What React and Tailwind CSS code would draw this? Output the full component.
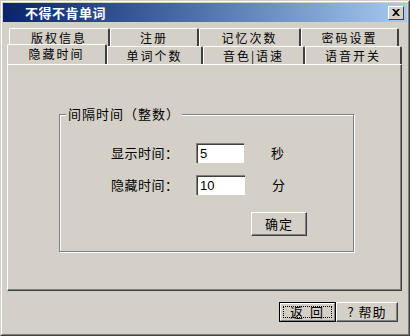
import React from "react";

const font = { fontFamily: '"Noto Sans CJK SC", "Noto Sans", sans-serif' };

function Tab({ w, label, selected }) {
  return (
    <div
      className={
        "flex items-center justify-center border-l border-t border-r-2 border-l-white border-t-white border-r-[#404040] rounded-t-[2px] text-[12px] leading-[12px] tracking-[2px] text-black bg-[#d4d0c8] " +
        (selected ? "h-[20px] -mt-[2px] relative z-10 pb-[1px]" : "h-[18px]")
      }
      style={{ width: w }}
    >
      {label}
    </div>
  );
}

export default function App() {
  return (
    <div
      className="w-[410px] h-[336px] bg-[#d4d0c8] border-t border-l border-t-[#d4d0c8] border-l-[#d4d0c8] border-r border-b border-r-[#404040] border-b-[#404040] overflow-hidden"
      style={font}
    >
      <div className="h-full border-t border-l border-t-white border-l-white border-r border-b border-r-[#808080] border-b-[#808080] p-[1px] flex flex-col">
        {/* title bar */}
        <div className="h-[19px] flex items-center justify-between pl-[22px] pr-[3px] bg-gradient-to-r from-[#0a246a] to-[#a6caf0]">
          <span className="text-white font-bold text-[13px] tracking-[0.5px] leading-none">不得不肯单词</span>
          <div className="w-[16px] h-[14px] bg-[#d4d0c8] border-t border-l border-t-white border-l-white border-r border-b border-r-[#404040] border-b-[#404040] flex items-center justify-center">
            <svg width="8" height="7" viewBox="0 0 8 7">
              <path d="M0 0L2 0L4 2L6 0L8 0L5 3.5L8 7L6 7L4 5L2 7L0 7L3 3.5Z" fill="#000" />
            </svg>
          </div>
        </div>

        {/* tabs */}
        <div className="flex flex-col pt-[5px] pl-[4px]">
          <div className="flex pl-[2px] pt-[1px]">
            <Tab w={101} label="版权信息" />
            <Tab w={89} label="注册" />
            <Tab w={102} label="记忆次数" />
            <Tab w={98} label="密码设置" />
          </div>
          <div className="flex">
            <Tab w={100} label="隐藏时间" selected />
            <Tab w={96} label="单词个数" />
            <Tab w={102} label="音色|语速" />
            <Tab w={97} label="语音开关" />
          </div>
        </div>

        {/* panel */}
        <div className="ml-[4px] w-[395px] h-[227px] border-l border-t border-l-white border-t-white border-r border-b border-r-[#404040] border-b-[#404040]">
          <div className="w-full h-full border-r border-b border-r-[#808080] border-b-[#808080] pt-[49px] pl-[51px]">
            {/* group box */}
            <div className="relative w-[295px] h-[138px] border border-[#808080] shadow-[inset_1px_1px_0_#ffffff,1px_1px_0_#ffffff]">
              <div className="absolute -top-[9px] left-[6px] px-[2px] bg-[#d4d0c8] text-[13px] tracking-[1px] leading-[16px] text-black">
                间隔时间（整数）
              </div>
              <div className="flex flex-col pt-[28px] pl-[51px] text-[13px] text-black">
                <div className="flex items-center h-[20px]">
                  <span className="w-[85px] tracking-[0.5px]">显示时间：</span>
                  <div className="w-[48px] h-[20px] bg-white border-t border-l border-t-[#808080] border-l-[#808080] shadow-[inset_1px_1px_0_#404040] flex items-center pl-[3px] text-[13px]" style={{ fontFamily: '"Liberation Sans", sans-serif' }}>
                    5
                  </div>
                  <span className="ml-[27px]">秒</span>
                </div>
                <div className="flex items-center h-[20px] mt-[12px]">
                  <span className="w-[85px] tracking-[0.5px]">隐藏时间：</span>
                  <div className="w-[49px] h-[20px] bg-white border-t border-l border-t-[#808080] border-l-[#808080] shadow-[inset_1px_1px_0_#404040] flex items-center pl-[3px] text-[13px]" style={{ fontFamily: '"Liberation Sans", sans-serif' }}>
                    10
                  </div>
                  <span className="ml-[27px]">分</span>
                </div>
                <div className="mt-[17px] ml-[140px] w-[56px] h-[24px] border-t border-l border-t-white border-l-white border-r border-b border-r-[#404040] border-b-[#404040] shadow-[inset_-1px_-1px_0_#808080] flex items-center justify-center tracking-[1px]">
                  确定
                </div>
              </div>
            </div>
          </div>
        </div>

        {/* bottom buttons */}
        <div className="flex justify-end pr-[9px] pt-[11px] text-[13px] text-black">
          <div className="w-[57px] h-[20px] border border-black flex">
            <div className="flex-1 border-t border-l border-t-white border-l-white border-r border-b border-r-[#808080] border-b-[#808080] p-[2px]">
              <div className="w-full h-full border border-dotted border-black flex items-center justify-center tracking-[2px] leading-[14px]">
                返 回
              </div>
            </div>
          </div>
          <div className="w-[62px] h-[20px] border-t border-l border-t-white border-l-white border-r border-b border-r-[#404040] border-b-[#404040] shadow-[inset_-1px_-1px_0_#808080] flex items-center justify-center tracking-[1px] leading-[14px]">
            ? 帮助
          </div>
        </div>
      </div>
    </div>
  );
}
